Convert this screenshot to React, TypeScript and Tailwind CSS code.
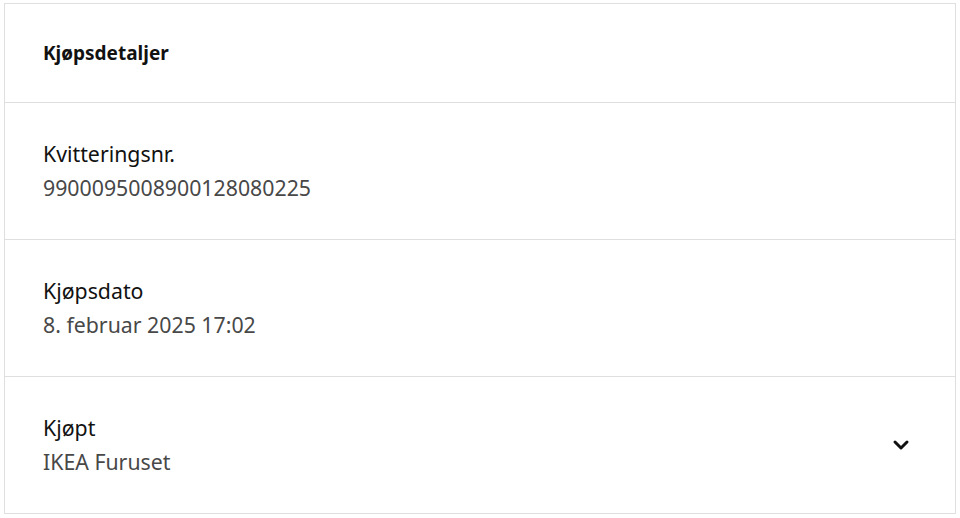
import { ChevronDown } from "lucide-react";

const rows = [
  { label: "Kvitteringsnr.", value: "9900095008900128080225" },
  { label: "Kjøpsdato", value: "8. februar 2025 17:02" },
  { label: "Kjøpt", value: "IKEA Furuset", expandable: true },
];

export default function App() {
  return (
    <div className="h-[518px] w-[960px] overflow-hidden bg-white pl-[4px] pt-[3px] font-['Noto_Sans',sans-serif]">
      <div className="w-[952px] border border-[#dfdfdf]">
        <div className="flex h-[98px] items-center px-[38px] text-[19px] font-bold text-[#111]">
          Kjøpsdetaljer
        </div>
        {rows.map((r) => (
          <div
            key={r.label}
            className="flex h-[137px] items-center justify-between border-t border-[#dfdfdf] pl-[38px] pr-[42px]"
          >
            <div className="flex flex-col">
              <span className="text-[21.3px] leading-[34px] text-[#111]">{r.label}</span>
              <span className="text-[21.3px] leading-[34px] text-[#484848]">{r.value}</span>
            </div>
            {r.expandable && <ChevronDown className="h-6 w-6 text-[#111]" strokeWidth={3} />}
          </div>
        ))}
      </div>
    </div>
  );
}
